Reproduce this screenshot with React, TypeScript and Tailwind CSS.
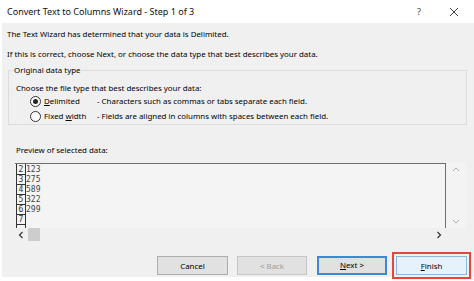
import React from "react";

const F = { fontFamily: '"Noto Sans", "Open Sans", sans-serif' };

function Radio({ checked }: { checked: boolean }) {
  return (
    <div className="w-[11px] h-[11px] rounded-full border border-[#333] bg-white flex items-center justify-center">
      {checked && <div className="w-[5px] h-[5px] rounded-full bg-[#222]" />}
    </div>
  );
}

const rows = [
  ["2", "123"],
  ["3", "275"],
  ["4", "589"],
  ["5", "322"],
  ["6", "299"],
  ["7", ""],
];

export default function App() {
  return (
    <div className="w-[474px] h-[281px] bg-white text-black overflow-hidden" style={F}>
      {/* Title bar */}
      <div className="h-[23px] flex items-center bg-white">
        <div className="pl-[7px] text-[9px] leading-[12px] text-[#111]">Convert Text to Columns Wizard - Step 1 of 3</div>
        <div className="ml-auto flex items-center">
          <span className="text-[9px] text-[#444] mr-[28px]">?</span>
          <svg width="10" height="10" viewBox="0 0 10 10" className="mr-[15px]">
            <path d="M1 1 L9 9 M9 1 L1 9" stroke="#444" strokeWidth="1" />
          </svg>
        </div>
      </div>
      {/* Body */}
      <div className="ml-[2px] h-[254px] bg-[#f0f0f0] flex flex-col text-[7.9px]">
        <div className="mt-[4px] ml-[5px] h-[14px] leading-[14px]">The Text Wizard has determined that your data is Delimited.</div>
        <div className="mt-[6px] ml-[5px] h-[14px] leading-[14px]">If this is correct, choose Next, or choose the data type that best describes your data.</div>
        {/* Group box */}
        <div className="relative mt-[9px] ml-[6px] w-[459px] h-[55px] border border-[#dcdcdc] flex flex-col">
          <div className="absolute left-[4px] top-[-7px] px-[1px] bg-[#f0f0f0] leading-[12px]">Original data type</div>
          <div className="mt-[11px] ml-[7px] h-[12px] leading-[12px]">Choose the file type that best describes your data:</div>
          <div className="ml-[21px] h-[16px] flex items-center">
            <div className="w-[67px] flex items-center gap-[3px]">
              <Radio checked />
              <span><span className="underline">D</span>elimited</span>
            </div>
            <span>- Characters such as commas or tabs separate each field.</span>
          </div>
          <div className="ml-[21px] h-[16px] flex items-center">
            <div className="w-[67px] flex items-center gap-[3px]">
              <Radio checked={false} />
              <span>Fixed <span className="underline">w</span>idth</span>
            </div>
            <span>- Fields are aligned in columns with spaces between each field.</span>
          </div>
        </div>
        <div className="mt-[18px] ml-[14px] h-[14px] leading-[14px]">Preview of selected data:</div>
        {/* Preview control */}
        <div className="mt-[6px] ml-[13px] w-[451px] h-[78px] flex">
          <div className="w-[431px] flex flex-col">
            <div className="h-[65px] border-t border-r border-[#6e6e6e] bg-[#f4f4f4] flex" style={{ fontFamily: '"DejaVu Sans Mono", monospace' }}>
              <div className="ml-[1px] w-[10px] border-l border-r border-[#333] pt-[1px] flex flex-col">
                {rows.map(([n]) => (
                  <div key={n} className="h-[10px] border-b border-[#333] text-[8px] leading-[9px] text-center text-[#333]">{n}</div>
                ))}
              </div>
              <div className="pt-[1px] flex flex-col">
                {rows.map(([n, v]) => (
                  <div key={n} className="h-[10px] text-[8px] leading-[10px] text-[#444]">{v}</div>
                ))}
              </div>
            </div>
            <div className="h-[13px] flex items-center">
              <svg width="6" height="8" viewBox="0 0 6 8" className="ml-[3px]">
                <path d="M4.5 1 L1.5 4 L4.5 7" stroke="#333" strokeWidth="1.2" fill="none" />
              </svg>
              <div className="ml-[4px] w-[12px] h-[13px] bg-[#cdcdcd]" />
              <svg width="6" height="8" viewBox="0 0 6 8" className="ml-auto mr-[4px]">
                <path d="M1.5 1 L4.5 4 L1.5 7" stroke="#333" strokeWidth="1.2" fill="none" />
              </svg>
            </div>
          </div>
          <div className="w-[20px] h-[65px] bg-[#f3f3f3] flex flex-col items-center justify-between py-[4px]">
            <svg width="8" height="5" viewBox="0 0 8 5">
              <path d="M1 4 L4 1 L7 4" stroke="#b0b0b0" strokeWidth="1" fill="none" />
            </svg>
            <svg width="8" height="5" viewBox="0 0 8 5">
              <path d="M1 1 L4 4 L7 1" stroke="#b0b0b0" strokeWidth="1" fill="none" />
            </svg>
          </div>
        </div>
        {/* Buttons */}
        <div className="mt-[15px] ml-[155px] flex items-center">
          <button className="w-[71px] h-[19px] bg-[#e1e1e1] border border-[#adadad] text-[7.9px] leading-[16px]">Cancel</button>
          <button className="ml-[9px] w-[70px] h-[19px] bg-[#e1e1e1] border border-[#c6c6c6] text-[7.9px] leading-[16px] text-[#a0a0a0]">&lt; Back</button>
          <button className="ml-[10px] w-[70px] h-[19px] bg-[#e1e1e1] border-2 border-[#3a8ad6] text-[7.9px] leading-[15px]"><span className="underline">N</span>ext &gt;</button>
          <div className="ml-[9px] relative">
            <button className="w-[71px] h-[19px] bg-[#e5f1fb] border border-[#8cb8e0] text-[7.9px] leading-[16px]"><span className="underline">F</span>inish</button>
            <div className="absolute left-[-4px] top-[-4px] w-[79px] h-[27px] border-[2px] border-[#e5463c]" />
          </div>
        </div>
      </div>
    </div>
  );
}
